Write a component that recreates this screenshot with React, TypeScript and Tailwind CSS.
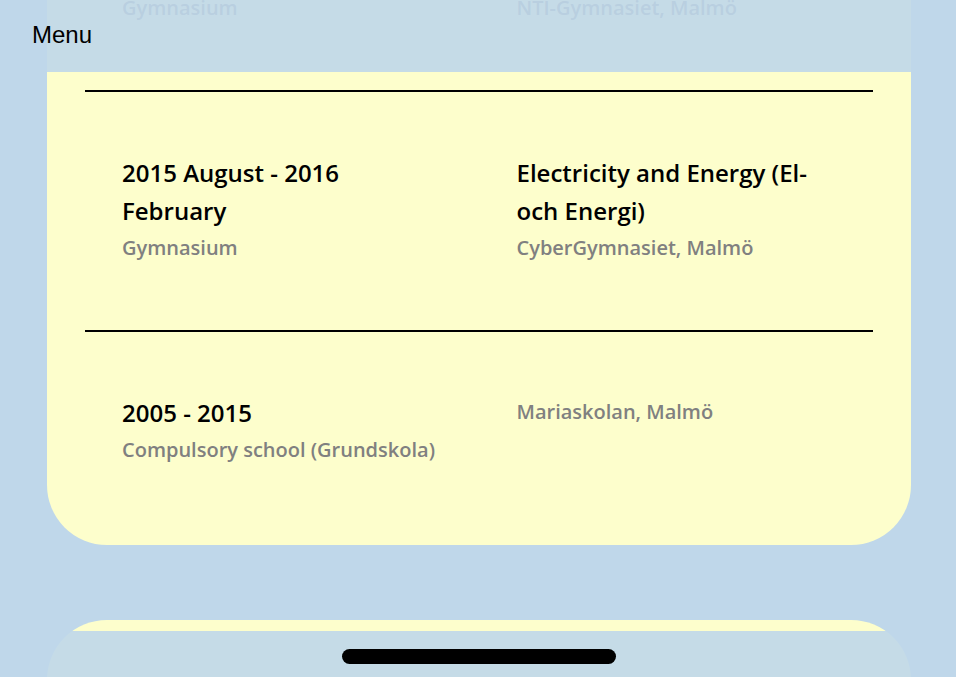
import { JSX } from "react";

type EducationRow = {
  period: string;
  level: string;
  program?: string;
  school: string;
};

const rows: EducationRow[] = [
  {
    period: "2016 August - 2019 June",
    level: "Gymnasium",
    program: "Technology",
    school: "NTI-Gymnasiet, Malmö",
  },
  {
    period: "2015 August - 2016 February",
    level: "Gymnasium",
    program: "Electricity and Energy (El-och Energi)",
    school: "CyberGymnasiet, Malmö",
  },
  {
    period: "2005 - 2015",
    level: "Compulsory school (Grundskola)",
    school: "Mariaskolan, Malmö",
  },
];

function Row({ row }: { row: EducationRow }): JSX.Element {
  return (
    <div className="grid grid-cols-2 gap-x-[75px] px-[37px] pt-[62px] pb-[64px]">
      <div>
        <h3 className="text-[24px] leading-[38px] font-semibold text-black">{row.period}</h3>
        <p className="text-[20px] leading-[36px] font-semibold text-[#808080]">{row.level}</p>
      </div>
      <div>
        {row.program ? (
          <h3 className="text-[24px] leading-[38px] font-semibold text-black">{row.program}</h3>
        ) : null}
        <p className="text-[20px] leading-[36px] font-semibold text-[#808080]">{row.school}</p>
      </div>
    </div>
  );
}

export default function App(): JSX.Element {
  return (
    <div className="relative h-[677px] overflow-hidden bg-[#bfd7ea] font-['Open_Sans',sans-serif]">
      <header className="absolute inset-x-0 top-0 z-10 h-[72px] bg-[#bfd7ea]/90">
        <span className="absolute left-[32px] top-[21px] font-['Liberation_Sans',Arial,sans-serif] text-[24px] leading-[28px] text-black">
          Menu
        </span>
      </header>

      <main className="pl-[47px] pr-[45px]">
        <section className="-mt-[110px] rounded-b-[60px] bg-[#fdfecc] px-[38px] pb-[13px]">
          <div className="divide-y-2 divide-black">
            {rows.map((row) => (
              <Row key={row.period} row={row} />
            ))}
          </div>
        </section>

        <section className="mt-[75px] h-[300px] rounded-t-[60px] bg-[#fdfecc]" />
      </main>

      <div className="absolute inset-x-0 bottom-0 z-10 flex h-[46px] justify-center bg-[#bfd7ea]/90 pt-[18px] pl-[2px]">
        <div className="h-[15px] w-[274px] rounded-full bg-black" />
      </div>
    </div>
  );
}
